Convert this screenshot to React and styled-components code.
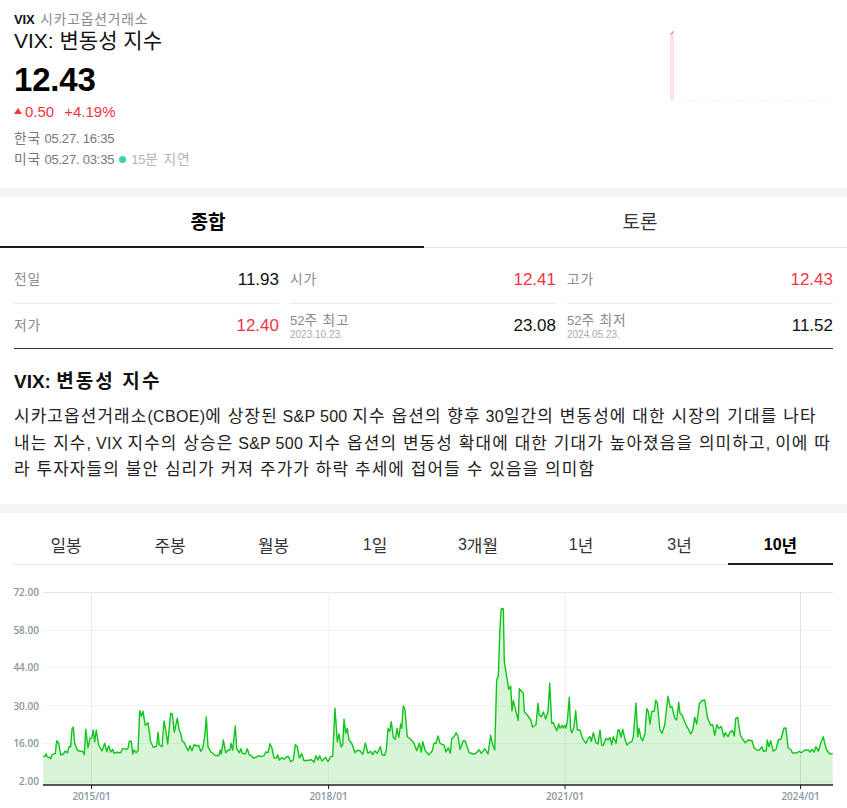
import React from "react";
import styled, { createGlobalStyle } from "styled-components";

const GlobalStyle = createGlobalStyle`
  html, body {
    margin: 0;
    padding: 0;
    background: #fff;
    font-family: "Liberation Sans", "Noto Sans CJK KR", sans-serif;
  }
  * { box-sizing: border-box; }
`;

const RED = "#f5333f";

const Page = styled.div`
  width: 847px;
  height: 808px;
  overflow: hidden;
`;

const Header = styled.header`
  display: flex;
  justify-content: space-between;
  height: 188px;
  padding: 12px 14px 0;
`;

const Exchange = styled.div`
  font-size: 13px;
  line-height: 16px;
  color: #8a8a8a;
  b {
    color: #111;
    margin-right: 6px;
    letter-spacing: -0.2px;
  }
`;

const Title = styled.h1`
  margin: 0;
  font-size: 21px;
  line-height: 26px;
  font-weight: 400;
  color: #111;
`;

const Price = styled.div`
  margin-top: 7px;
  font-size: 33px;
  line-height: 38px;
  font-weight: 700;
  color: #000;
  letter-spacing: -0.2px;
`;

const Change = styled.div`
  display: flex;
  align-items: center;
  margin-top: 2px;
  height: 20px;
  font-size: 15px;
  color: ${RED};
  gap: 10px;
`;

const Arrow = styled.span`
  display: inline-block;
  width: 0;
  height: 0;
  margin-right: -7px;
  border-left: 4px solid transparent;
  border-right: 4px solid transparent;
  border-bottom: 6px solid ${RED};
`;

const TimeRow = styled.div`
  display: flex;
  align-items: center;
  font-size: 13px;
  line-height: 21px;
  letter-spacing: -0.2px;
  color: #777;
  margin-top: ${(p) => p.$top || 0}px;
  white-space: pre;
`;

const Dot = styled.span`
  width: 7px;
  height: 7px;
  border-radius: 50%;
  background: #3dd1ab;
  margin: 0 5px;
`;

const Delay = styled.span`
  color: #b4b4b4;
`;

const Spark = styled.svg`
  display: block;
  margin-top: 18px;
`;

const Band = styled.div`
  height: 9px;
  background: #f3f4f6;
`;

const Tabs = styled.nav`
  display: flex;
  height: 51px;
  border-bottom: 1px solid #e5e5e5;
`;

const Tab = styled.div`
  flex: 1;
  display: flex;
  align-items: center;
  justify-content: center;
  margin-bottom: -1px;
  padding-bottom: 2px;
  font-size: 18px;
  color: ${(p) => (p.$active ? "#000" : "#333")};
  font-weight: ${(p) => (p.$active ? 700 : 400)};
  border-bottom: 2px solid ${(p) => (p.$active ? "#1c1c1f" : "transparent")};
  &:first-child {
    flex: 0 0 424px;
    padding-right: 8px;
  }
  &:last-child { padding-left: 9px; }
`;

const Quotes = styled.section`
  margin: 7px 14px 0;
  border-bottom: 1px solid #333;
`;

const QuoteRow = styled.div`
  display: grid;
  grid-template-columns: 265px 266px 266px;
  column-gap: 11px;
  height: ${(p) => p.$height}px;
`;

const Quote = styled.div`
  display: flex;
  align-items: center;
  justify-content: space-between;
  padding-top: ${(p) => (p.$line ? 2 : 0)}px;
  border-bottom: ${(p) => (p.$line ? "1px solid #eaeaea" : "none")};
`;

const QuoteLabel = styled.div`
  font-size: 13px;
  line-height: 16px;
  color: #8a8a8a;
  small {
    display: block;
    font-size: 10px;
    line-height: 11px;
    color: #aaa;
  }
`;

const QuoteValue = styled.div`
  font-size: 17px;
  color: ${(p) => (p.$up ? RED : "#111")};
`;

const About = styled.section`
  height: 155px;
  padding: 21px 15px 0 14px;
`;

const AboutTitle = styled.h2`
  margin: 0 0 10px;
  font-size: 19px;
  line-height: 24px;
  font-weight: 700;
  color: #111;
`;

const AboutText = styled.p`
  margin: 0;
  font-size: 16px;
  line-height: 26.5px;
  letter-spacing: 0.3px;
  color: #222;
  word-break: break-all;
`;

const Periods = styled.nav`
  display: grid;
  grid-template-columns: 104px 104px 103px 100px 106px 100px 97px 105px;
  height: 52px;
  margin: 0 14px;
  border-bottom: 1px solid #e5e5e5;
`;

const Period = styled.div`
  display: flex;
  align-items: center;
  justify-content: center;
  margin-bottom: -1px;
  padding-top: 13px;
  font-size: 16px;
  color: ${(p) => (p.$active ? "#000" : "#333")};
  font-weight: ${(p) => (p.$active ? 700 : 400)};
  border-bottom: 2px solid ${(p) => (p.$active ? "#1c1c1f" : "transparent")};
`;

const ChartBox = styled.svg`
  display: block;
`;

const Ko = styled.span`
  font-size: ${(p) => p.$scale}em;
  letter-spacing: ${(p) => p.$track}em;
`;

// hangul runs come out narrower than in the reference, so they get their own size and tracking
function Mixed({ text, scale = 1.06, track = 0.06 }) {
  return text.split(/([가-힣]+(?: [가-힣]+)*)/).map((part, i) =>
    i % 2 ? (
      <Ko key={i} $scale={scale} $track={track}>{part}</Ko>
    ) : (
      part
    )
  );
}

// traced from the reference at 3x, one list per 280px stretch
const seg1 = [130,527,134,530,138,521,142,530,146,531,152,536,156,524,166,520,170,482,176,490,182,525,190,522,196,513,202,518,208,499,212,500,216,447,220,442,224,490,232,510,240,514,248,514,253,524,257,448,264,503,270,475,275,474,280,450,284,485,289,450,296,495,306,513,314,490,320,515,326,497,332,516,338,508,342,520,350,517,362,518,368,505,378,508,384,505,388,484,394,484,398,522,402,510,408,518,414,512,419,392,424,408,429,394,436,436,444,428,452,485,460,502,470,498,474,457,478,494,486,500,492,423,497,450,503,492,512,400,517,402,523,456,532,415,538,452,542,460,547,484,552,486,558,500,565,512,570,497,576,512,582,494,590,498,596,496,602,514,608,505,614,470,619,411,624,500,632,515,645,526,656,527,661,510,664,522,670,480,677,518,684,511,690,510,693,490,698,510,706,438,710,505,718,518,723,506,727,520,736,522,742,506,748,525,754,527,760,534,770,531,776,527,782,530,792,527,797,516,804,518,810,491,816,505,822,534,830,533,833,524,838,540];
const seg2 = [5,533,12,538,20,530,26,530,32,545,40,540,46,494,52,500,58,534,65,521,72,542,85,541,95,539,102,547,108,527,114,540,119,527,126,543,137,532,144,545,152,530,158,528,165,385,172,485,177,462,183,500,188,494,192,418,197,460,202,445,207,480,215,490,225,518,232,511,240,512,248,523,256,490,264,520,272,514,278,524,284,512,292,520,301,500,306,524,314,526,319,510,324,446,329,454,334,425,340,472,346,478,351,445,356,472,362,432,365,445,370,377,375,390,382,470,392,478,402,490,410,512,418,490,424,516,428,485,436,512,446,524,456,514,462,490,468,490,474,468,480,490,493,496,498,516,505,503,511,520,515,476,522,470,528,458,534,468,540,508,550,482,555,482,568,518,578,522,588,520,597,509,604,520,614,506,624,522,632,466,638,495,644,510,650,300,655,288,660,140,664,85,670,87,673,245,680,290,686,328,692,318,696,392,700,362,708,395,715,421,718,326,726,335,730,340,733,395,742,405,752,420,758,441,768,434,774,370,778,405,784,410,790,396,797,417,804,395,809,310,815,430,820,428,823,435,830,452,836,432];
const seg3 = [0,445,6,436,10,444,14,436,18,444,22,424,28,352,32,450,36,458,42,440,47,392,52,450,60,450,68,476,78,490,85,474,90,470,94,484,100,458,108,488,114,492,120,450,125,495,130,496,138,475,144,480,150,472,155,494,160,470,168,490,174,450,178,450,183,472,188,448,195,478,201,495,208,488,216,484,220,472,228,370,233,470,237,445,243,475,248,482,255,460,260,386,265,395,270,432,275,395,283,393,287,361,292,368,300,450,306,460,314,435,324,349,331,382,336,380,344,415,350,420,356,367,360,400,366,405,376,430,384,445,392,462,398,450,404,412,410,432,418,372,425,362,434,360,443,415,452,436,458,434,464,466,470,434,476,445,484,440,492,470,496,458,504,470,510,456,518,452,523,468,527,415,533,412,541,465,548,478,556,488,564,480,576,482,582,503,590,510,598,511,606,500,610,514,619,512,622,480,627,500,632,482,640,514,648,508,655,480,663,477,672,444,678,445,684,503,694,510,697,519,710,519,718,514,724,518,735,510,745,510,750,516,756,508,762,516,768,500,775,514,782,490,790,470,794,490,800,510,808,520,812,522,818,520];

const CHART_TOP = 565;

const toPoints = (seg, offset) => {
  const out = [];
  for (let i = 0; i < seg.length; i += 2) {
    out.push([offset + seg[i] / 3, 580 + seg[i + 1] / 3 - CHART_TOP]);
  }
  return out;
};

const line = [...toPoints(seg1, 0), ...toPoints(seg2, 280), ...toPoints(seg3, 560)];
const linePath = line.map(([x, y]) => `${x.toFixed(1)},${y.toFixed(1)}`).join(" ");
const lastX = line[line.length - 1][0];
const baseY = 785 - CHART_TOP;
const areaPath = `${line[0][0]},${baseY} ${linePath} ${lastX},${baseY}`;

const yTicks = [
  ["72.00", 592.5],
  ["58.00", 630.5],
  ["44.00", 667.5],
  ["30.00", 706],
  ["16.00", 743.5],
  ["2.00", 781.5],
];
const xTicks = [
  ["2015/01", 91.5, "#e9eaec"],
  ["2018/01", 328.5, "#f2f3f4"],
  ["2021/01", 565, "#e8ecf0"],
  ["2024/01", 800.5, "#dfe3e8"],
];

const AxisText = styled.text`
  font-family: "Open Sans", "Liberation Sans", sans-serif;
  font-size: 10px;
  font-weight: 600;
  fill: #8b95a1;
`;

function Chart() {
  return (
    <ChartBox width="847" height="243" viewBox="0 0 847 243">
      {yTicks.map(([label, y]) => (
        <g key={label}>
          <line x1="43" x2="833" y1={y - CHART_TOP} y2={y - CHART_TOP} stroke={label === "72.00" ? "#e4e6ea" : "#f0f1f3"} />
          <AxisText x="39" y={y - CHART_TOP + 3.5} textAnchor="end">{label}</AxisText>
        </g>
      ))}
      {xTicks.map(([label, x, color]) => (
        <g key={label}>
          <line x1={x} x2={x} y1={592 - CHART_TOP} y2={baseY} stroke={color} />
          <line x1={x} x2={x} y1={baseY} y2={baseY + 4} stroke="#222" />
          <AxisText x={x} y={baseY + 15} textAnchor="middle">{label}</AxisText>
        </g>
      ))}
      <polygon points={areaPath} fill="rgba(14, 195, 14, 0.16)" />
      <polyline points={linePath} fill="none" stroke="#0fc41a" strokeWidth="1.4" strokeLinejoin="round" />
      <line x1="43" x2="833" y1={baseY} y2={baseY} stroke="#222" strokeWidth="1.5" />
    </ChartBox>
  );
}

const quotes = [
  [
    { label: "전일", value: "11.93" },
    { label: "시가", value: "12.41", up: true },
    { label: "고가", value: "12.43", up: true },
  ],
  [
    { label: "저가", value: "12.40", up: true },
    { label: "52주 최고", sub: "2023.10.23.", value: "23.08" },
    { label: "52주 최저", sub: "2024.05.23.", value: "11.52" },
  ],
];

const periods = ["일봉", "주봉", "월봉", "1일", "3개월", "1년", "3년", "10년"];

const aboutText =
  "시카고옵션거래소(CBOE)에 상장된 S&P 500 지수 옵션의 향후 30일간의 변동성에 대한 시장의 기대를 나타내는 지수, VIX 지수의 상승은 S&P 500 지수 옵션의 변동성 확대에 대한 기대가 높아졌음을 의미하고, 이에 따라 투자자들의 불안 심리가 커져 주가가 하락 추세에 접어들 수 있음을 의미함";

export default function App() {
  return (
    <Page>
      <GlobalStyle />
      <Header>
        <div>
          <Exchange>
            <b>VIX</b>
            <Mixed text="시카고옵션거래소" />
          </Exchange>
          <Title>VIX: 변동성 지수</Title>
          <Price>12.43</Price>
          <Change>
            <Arrow />
            <span>0.50</span>
            <span>+4.19%</span>
          </Change>
          <TimeRow $top={7}>
            <span><Mixed text="한국 05.27. 16:35" /></span>
          </TimeRow>
          <TimeRow>
            <span><Mixed text="미국 05.27. 03:35" /></span>
            <Dot />
            <Delay><Mixed text="15분 지연" /></Delay>
          </TimeRow>
        </div>
        <Spark width="163" height="72" viewBox="0 0 163 72">
          <rect x="0" y="2" width="4" height="68" fill="#fde3e4" />
          <polyline points="0.5,4 2,3.5 3.5,1" fill="none" stroke="#f26a72" strokeWidth="1" />
          <line x1="0" x2="162" y1="70.5" y2="70.5" stroke="#f2f2f2" strokeDasharray="2 1" />
        </Spark>
      </Header>
      <Band />
      <Tabs>
        <Tab $active><Mixed text="종합" track={0} /></Tab>
        <Tab><Mixed text="토론" track={0} /></Tab>
      </Tabs>
      <Quotes>
        {quotes.map((row, i) => (
          <QuoteRow key={i} $height={i === 0 ? 49 : 44}>
            {row.map((q) => (
              <Quote key={q.label} $line={i === 0}>
                <QuoteLabel>
                  <Mixed text={q.label} />
                  {q.sub && <small>{q.sub}</small>}
                </QuoteLabel>
                <QuoteValue $up={q.up}>{q.value}</QuoteValue>
              </Quote>
            ))}
          </QuoteRow>
        ))}
      </Quotes>
      <About>
        <AboutTitle><Mixed text="VIX: 변동성 지수" scale={1} track={0.11} /></AboutTitle>
        <AboutText><Mixed text={aboutText} track={0.065} /></AboutText>
      </About>
      <Band />
      <Periods>
        {periods.map((p) => (
          <Period key={p} $active={p === "10년"}><Mixed text={p} track={0} /></Period>
        ))}
      </Periods>
      <Chart />
    </Page>
  );
}
